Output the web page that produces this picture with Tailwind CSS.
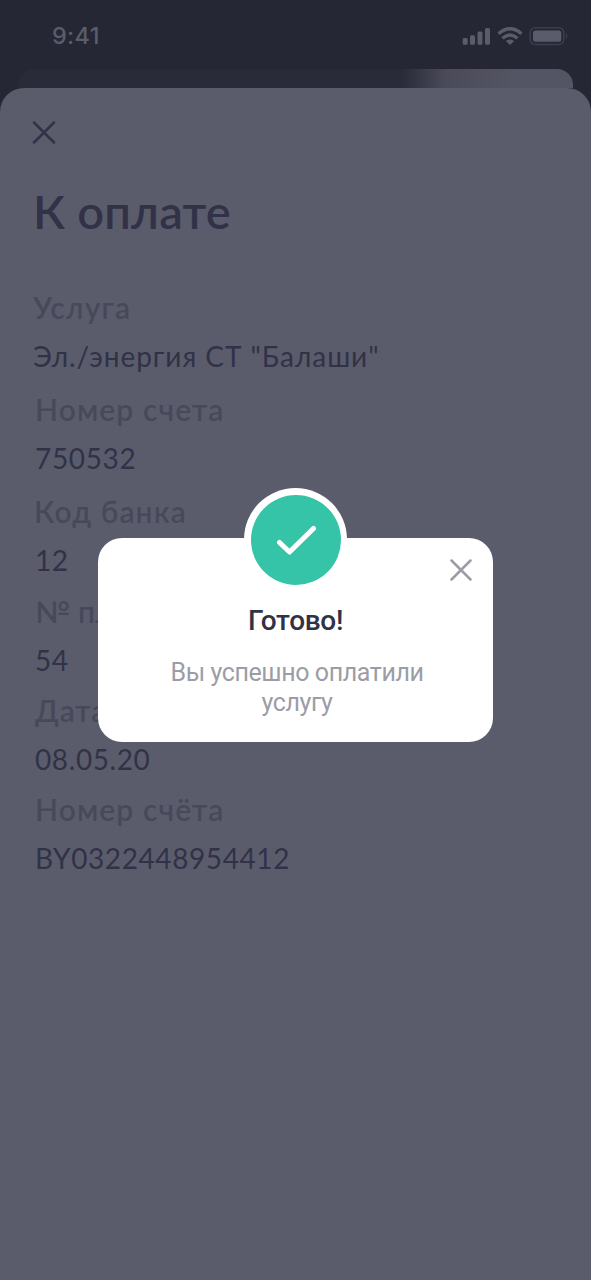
<!DOCTYPE html>
<html lang="ru">
<head>
<meta charset="utf-8">
<title>К оплате</title>
<script src="https://cdn.jsdelivr.net/npm/@tailwindcss/browser@4"></script>
</head>
<body class="bg-[#252735]">
<div class="relative flex h-[1280px] w-[591px] flex-col overflow-hidden bg-[#252735] font-['Lato','Noto_Sans',sans-serif] text-[#313248]">
  <header class="flex h-[69px] shrink-0 items-start justify-between pt-[21px] pr-[23px] pl-[51px] text-[#5b5c6b]">
    <span class="pl-px font-['Inter',sans-serif] text-[23.5px] leading-[30px] font-medium tracking-[0.3px] whitespace-nowrap">9:41</span>
    <svg class="mt-[4px] h-[24px] w-[106px]" viewBox="0 0 106 24" fill="currentColor">
      <rect x="0.7" y="13" width="5" height="6.8" rx="1.5"/>
      <rect x="8" y="10.3" width="5" height="9.5" rx="1.5"/>
      <rect x="15.5" y="6.5" width="5" height="13.3" rx="1.5"/>
      <rect x="23" y="3" width="5" height="16.8" rx="1.5"/>
      <g fill="none" stroke="currentColor" stroke-width="3.4"><path d="M36.5 8.7Q48 -1.3 59.5 8.7"/><path d="M40.5 13.2Q48 6.8 55.5 13.2"/></g>
      <path d="M43.8 16Q48 12.9 52.2 16L48 20Z"/>
      <rect x="68.2" y="2.7" width="33.6" height="16.8" rx="5" fill="none" stroke="#3c3d4d" stroke-width="1.5"/>
      <rect x="71" y="5.5" width="28.3" height="11.3" rx="2.5"/>
      <path d="M103.8 8Q107.2 11 103.8 14.3Z" fill="#3c3d4d"/>
    </svg>
  </header>
  <div class="mx-[18px] h-[19px] shrink-0 rounded-t-[16px] bg-linear-to-r from-[#292b39] from-[69%] via-[#4b4a58] via-[77%] to-[#545564] to-[90%]"></div>
  <main class="flex grow flex-col rounded-t-[24px] bg-[#5b5c6b] pt-[32px] pl-[32px]">
    <svg class="h-[24px] w-[24px] shrink-0" viewBox="0 0 24 24" fill="none" stroke="currentColor" stroke-width="2.5" stroke-linecap="round"><path d="M2 2.5L22 22.5M22 2.5L2 22.5"/></svg>
    <h1 class="mt-[37px] pl-[1px] text-[47px] leading-[60px] font-semibold tracking-[0.2px] whitespace-nowrap">К оплате</h1>
    <dl class="mt-[42px] flex flex-col pl-[1px] text-[28px] leading-[50px] whitespace-nowrap">
      <div><dt class="text-[30px] leading-[48px] font-semibold tracking-[1.1px] text-[#47495b]">Услуга</dt><dd class="tracking-[0.95px]">Эл./энергия СТ "Балаши"</dd></div>
      <div class="mt-[4px] pl-[2px]"><dt class="text-[30px] leading-[48px] font-semibold tracking-[1.1px] text-[#47495b]">Номер счета</dt><dd class="tracking-[0.65px]">750532</dd></div>
      <div class="mt-[4px] pl-[1px]"><dt class="text-[30px] leading-[48px] font-semibold tracking-[1.1px] text-[#47495b]">Код банка</dt><dd class="pl-[1px] tracking-[0.6px]">12</dd></div>
      <div class="mt-[2px] pl-[2px]"><dt class="text-[30px] leading-[48px] font-semibold tracking-[0.2px] text-[#47495b]">№ платежа</dt><dd class="tracking-[0.6px]">54</dd></div>
      <div class="mt-[1px] pl-[2px]"><dt class="text-[30px] leading-[48px] font-semibold tracking-[0.8px] text-[#47495b]">Дата</dt><dd class="tracking-[0.6px]">08.05.20</dd></div>
      <div class="mt-[1px] pl-[2px]"><dt class="text-[30px] leading-[48px] font-semibold tracking-[1.1px] text-[#47495b]">Номер счёта</dt><dd class="tracking-[0.6px]">BY0322448954412</dd></div>
    </dl>
  </main>
  <section class="absolute top-[538px] left-[98px] flex h-[204px] w-[395px] flex-col items-center rounded-[24px] bg-white pt-[67px] font-['Roboto',sans-serif]">
    <div class="absolute -top-[50px] left-[146px] flex size-[103px] items-center justify-center rounded-full bg-white">
      <div class="flex size-[90px] items-center justify-center rounded-full bg-[#35c4a8]">
        <svg class="h-[32px] w-[42px]" viewBox="0 0 42 32" fill="none" stroke="white" stroke-width="5" stroke-linecap="round" stroke-linejoin="round"><path d="M4.5 18.5L14.5 28L38.5 4.5"/></svg>
      </div>
    </div>
    <svg class="absolute top-[21px] right-[21px] size-[22px]" viewBox="0 0 22 22" fill="none" stroke="#9c9ca6" stroke-width="2.5" stroke-linecap="round"><path d="M1.5 1.5L20.5 20.5M20.5 1.5L1.5 20.5"/></svg>
    <h2 class="text-[28px] leading-[32px] font-medium tracking-[-0.3px] whitespace-nowrap">Готово!</h2>
    <p class="mt-[21px] pl-[3px] text-center text-[25px] leading-[30px] tracking-[-0.4px] whitespace-nowrap text-[#9c9ca6]">Вы успешно оплатили<br>услугу</p>
  </section>
</div>
</body>
</html>
